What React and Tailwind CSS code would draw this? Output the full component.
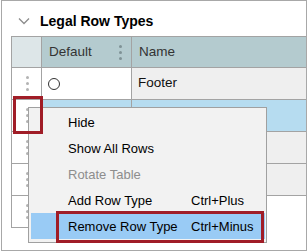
import React from "react";

const Dots = ({ className = "" }) => (
  <div className={`flex flex-col items-center gap-[3px] ${className}`}>
    <span className="block w-[3px] h-[3px] rounded-full bg-current" />
    <span className="block w-[3px] h-[3px] rounded-full bg-current" />
    <span className="block w-[3px] h-[3px] rounded-full bg-current" />
  </div>
);

const rows = [
  { name: "Footer", radio: true, selected: false, nameBg: "bg-[#efefef]", line: true },
  { name: "", radio: false, selected: true, nameBg: "bg-[#b6dcf0]", line: true },
  { name: "", radio: false, selected: false, nameBg: "bg-[#efefef]", line: true },
  { name: "", radio: false, selected: false, nameBg: "bg-[#efefef]", line: true },
  { name: "", radio: false, selected: false, nameBg: "bg-white", line: false },
];

const menuItems = [
  { label: "Hide" },
  { label: "Show All Rows" },
  { label: "Rotate Table", disabled: true },
  { label: "Add Row Type", shortcut: "Ctrl+Plus" },
  { label: "Remove Row Type", shortcut: "Ctrl+Minus", active: true },
];

const App = () => {
  return (
    <div
      className="relative w-[307px] h-[252px] bg-white overflow-hidden text-[#111]"
      style={{ fontFamily: '"Liberation Sans", Arial, sans-serif' }}
    >
      <div className="ml-[1px] w-[306px] h-[251px] border border-[#a8a8a8] overflow-hidden">
        {/* section header */}
        <div className="h-[35px] pt-[5px] flex items-center pl-[16px]">
          <svg width="12" height="8" viewBox="0 0 12 8" className="mr-[10px]">
            <path d="M1 1.5 L6 6.5 L11 1.5" fill="none" stroke="#8c8c8c" strokeWidth="1.3" />
          </svg>
          <span className="text-[14px] font-bold text-black">Legal Row Types</span>
        </div>

        {/* table */}
        <div className="ml-[9px] border-l border-t border-[#a3a3a3]">
          <div className="flex h-[31px] border-b border-[#a3a3a3] text-[13.5px] text-[#333]">
            <div className="w-[30px] border-r border-[#a3a3a3] bg-[#dde6e8]" />
            <div className="w-[90px] border-r border-[#a3a3a3] bg-[#b4cbcf] flex items-center pl-[7px] pr-[9px]">
              <span className="flex-1">Default</span>
              <Dots className="text-[#7f9296]" />
            </div>
            <div className="flex-1 bg-[#b4cbcf] flex items-center pl-[7px]">Name</div>
          </div>
          {rows.map((r, i) => (
            <div
              key={i}
              className={`flex h-[32px] ${r.line ? "border-b border-[#a3a3a3]" : ""}`}
            >
              <div
                className={`w-[30px] border-r border-[#a3a3a3] bg-white flex items-center justify-center pl-[2px] ${
                  r.line ? "" : "border-b"
                }`}
              >
                <Dots className="text-[#b3b3b3]" />
              </div>
              <div
                className={`w-[90px] border-r border-[#a3a3a3] flex items-center pl-[6px] ${
                  r.selected ? "bg-[#b6dcf0]" : "bg-white"
                }`}
              >
                {r.radio && (
                  <span className="block w-[12px] h-[12px] rounded-full border-[1.5px] border-[#333]" />
                )}
              </div>
              <div className={`flex-1 ${r.nameBg} flex items-center pl-[6px] text-[13.5px]`}>
                {r.name}
              </div>
            </div>
          ))}
        </div>
      </div>

      {/* context menu */}
      <div className="absolute left-[28px] top-[107px] w-[239px] h-[136px] border border-[#a0a0a0] bg-[#f2f2f2] pt-[1px] text-[13px]">
        {menuItems.map((m) => (
          <div
            key={m.label}
            className={`flex items-center h-[26px] ml-[2px] mr-[1px] pl-[37px] pt-[2px] ${
              m.active ? "bg-[#99cbf5]" : ""
            } ${m.disabled ? "text-[#8d8d8d]" : "text-black"}`}
          >
            <span className="w-[123px]">{m.label}</span>
            {m.shortcut && <span>{m.shortcut}</span>}
          </div>
        ))}
      </div>

      {/* red callouts */}
      <div className="absolute left-[13px] top-[96px] w-[30px] h-[38px] border-[3px] border-[#a01d27]" />
      <div className="absolute left-[56px] top-[211px] w-[208px] h-[32px] border-[3px] border-[#a01d27]" />
    </div>
  );
};

export default App;
